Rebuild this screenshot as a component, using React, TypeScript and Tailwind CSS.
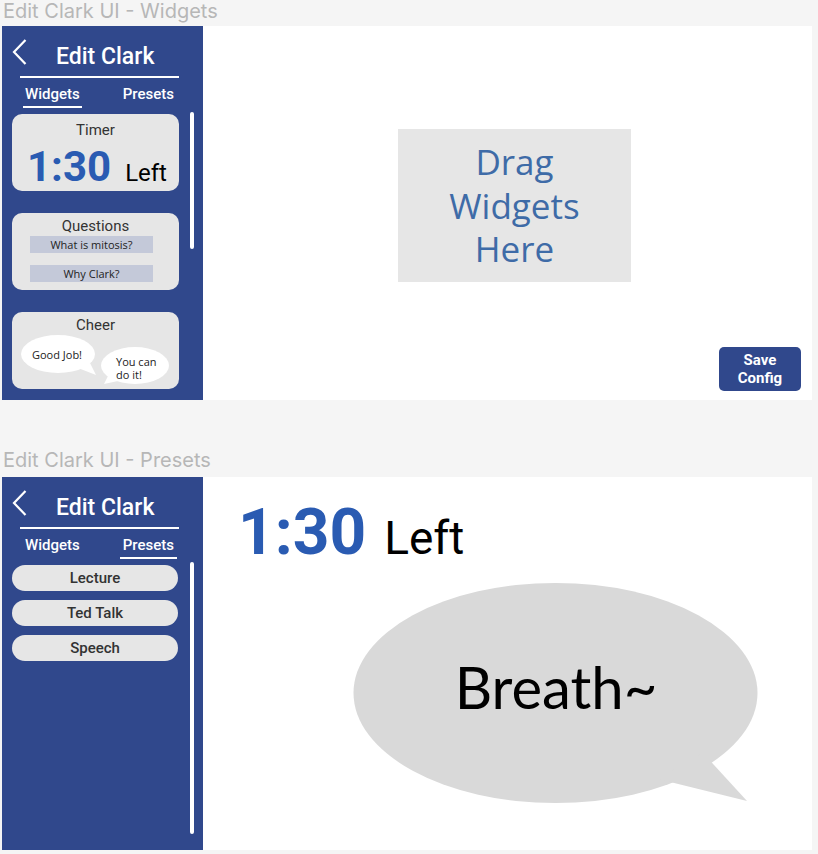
import React from "react";

const roboto = "font-['Roboto','Liberation_Sans',sans-serif]";
const soft = "font-['Open_Sans','Liberation_Sans',sans-serif]";

const Chevron = () => (
  <svg width="15" height="26" viewBox="0 0 15 26" className="ml-[10px] shrink-0">
    <path d="M13.5 1 L2 13 L13.5 25" fill="none" stroke="white" strokeWidth="2.2" />
  </svg>
);

const SideHeader = ({ tab }: { tab: "widgets" | "presets" }) => (
  <div className="pt-[13px]">
    <div className="flex items-start">
      <Chevron />
      <span className={`${roboto} ml-[29px] mt-[4px] text-[23px] leading-[28px] font-medium text-white`}>
        Edit Clark
      </span>
    </div>
    <div className="ml-[18px] mt-[5px] h-[2px] w-[159px] bg-white" />
    <div className={`${roboto} flex pl-[21px] mt-[6px] text-[15px] leading-[20px] font-medium text-white`}>
      <span
        className={`px-[2px] pb-[2px] border-b-2 ${
          tab === "widgets" ? "border-white" : "border-transparent"
        }`}
      >
        Widgets
      </span>
      <span
        className={`ml-[38px] px-[3px] pb-[2px] border-b-2 ${
          tab === "presets" ? "border-white" : "border-transparent"
        }`}
      >
        Presets
      </span>
    </div>
  </div>
);

const Title = ({ text }: { text: string }) => (
  <div className="h-[26px] pl-[3px]">
    <span className="font-['Inter','Liberation_Sans',sans-serif] text-[20px] leading-[22px] text-[#b7b7b7]">
      {text}
    </span>
  </div>
);

const CheerBubbles = () => (
  <div className="relative h-[55px]">
    <svg width="167" height="55" className="absolute left-0 top-0">
      <ellipse cx="46" cy="20" rx="37" ry="19" fill="white" />
      <polygon points="66,34 78,29 84,41" fill="white" />
      <ellipse cx="123" cy="31.5" rx="34" ry="18.5" fill="white" />
      <polygon points="96,42 106,47 92,50" fill="white" />
    </svg>
    <span className={`${soft} absolute left-[20px] top-[14px] text-[11px] leading-[14px] text-[#222]`}>
      Good Job!
    </span>
    <span className={`${soft} absolute left-[104px] top-[21px] text-[11px] leading-[13px] text-[#222]`}>
      You can
      <br />
      do it!
    </span>
  </div>
);

const WidgetsFrame = () => (
  <div className="ml-[2px] flex h-[374px] w-[810px] bg-white">
    <div className="w-[201px] shrink-0 bg-[#30488c]">
      <SideHeader tab="widgets" />
      <div className="mt-[4px] flex items-start">
        <div className="ml-[10px] mt-[2px] flex w-[167px] flex-col gap-[22px]">
          {/* Timer */}
          <div className="h-[77px] rounded-[10px] bg-[#e6e6e6] pt-[7px]">
            <div className={`${roboto} text-center text-[15px] leading-[18px] text-[#333]`}>Timer</div>
            <div className={`${roboto} mt-[7px] flex items-baseline pl-[15px]`}>
              <span className="text-[42px] leading-[42px] font-bold text-[#2a5bb2]">1:30</span>
              <span className="ml-[14px] text-[24px] leading-[24px] text-black">Left</span>
            </div>
          </div>
          {/* Questions */}
          <div className="h-[77px] rounded-[10px] bg-[#e6e6e6] pt-[4px]">
            <div className={`${roboto} text-center text-[15px] leading-[18px] text-[#333]`}>Questions</div>
            <div className={`${soft} ml-[18px] mt-[1px] flex w-[123px] flex-col gap-[12px] text-[11px] text-[#222]`}>
              <div className="h-[17px] bg-[#c4c9d9] text-center leading-[17px]">What is mitosis?</div>
              <div className="h-[17px] bg-[#c4c9d9] text-center leading-[17px]">Why Clark?</div>
            </div>
          </div>
          {/* Cheer */}
          <div className="h-[77px] rounded-[10px] bg-[#e6e6e6] pt-[4px]">
            <div className={`${roboto} text-center text-[15px] leading-[18px] text-[#333]`}>Cheer</div>
            <CheerBubbles />
          </div>
        </div>
        <div className="ml-[11px] h-[137px] w-[4px] rounded-full bg-white" />
      </div>
    </div>
    <div className="flex flex-1 flex-col">
      <div
        className={`${soft} ml-[195px] mt-[103px] flex h-[153px] w-[233px] flex-col items-center justify-center bg-[#e6e6e6] text-[35px] leading-[43.5px] text-[#3e6ba7]`}
      >
        <span>Drag</span>
        <span>Widgets</span>
        <span>Here</span>
      </div>
      <button
        className={`${roboto} mt-auto mb-[9px] mr-[11px] h-[44px] w-[82px] self-end rounded-[5px] bg-[#30488c] text-[15px] leading-[18px] font-bold text-white`}
      >
        Save
        <br />
        Config
      </button>
    </div>
  </div>
);

const PresetsFrame = () => (
  <div className="ml-[2px] flex h-[373px] w-[810px] bg-white">
    <div className="w-[201px] shrink-0 bg-[#30488c]">
      <SideHeader tab="presets" />
      <div className="mt-[3px] flex items-start">
        <div className={`${roboto} ml-[10px] mt-[3px] flex w-[166px] flex-col gap-[9px] text-[15px] font-medium text-[#333]`}>
          {["Lecture", "Ted Talk", "Speech"].map((p) => (
            <div key={p} className="h-[26px] rounded-[13px] bg-[#e6e6e6] text-center leading-[26px]">
              {p}
            </div>
          ))}
        </div>
        <div className="ml-[12px] h-[272px] w-[4px] rounded-full bg-white" />
      </div>
    </div>
    <div className="flex flex-1 flex-col pl-[35px]">
      <div className={`${roboto} mt-[24px] flex items-baseline`}>
        <span className="text-[64px] leading-[64px] font-bold text-[#2a5bb2]">1:30</span>
        <span className="ml-[18px] text-[46px] leading-[46px] text-black">Left</span>
      </div>
      <div className="relative ml-[115px] mt-[18px] h-[222px] w-[406px]">
        <svg width="406" height="222" className="absolute left-0 top-0">
          <ellipse cx="202.5" cy="110" rx="202" ry="110" fill="#d9d9d9" />
          <polygon points="350,170 394,218 305,196" fill="#d9d9d9" />
        </svg>
        <div className="absolute inset-0 flex items-center justify-center pb-[14px]">
          <span className="font-['Lato','Open_Sans',sans-serif] text-[58px] leading-[64px] text-black">
            Breath~
          </span>
        </div>
      </div>
    </div>
  </div>
);

export default function App() {
  return (
    <div className="h-[854px] w-[818px] overflow-hidden bg-[#f5f5f5]">
      <Title text="Edit Clark UI - Widgets" />
      <WidgetsFrame />
      <div className="mt-[49px] h-[28px] pl-[3px]">
        <span className="font-['Inter','Liberation_Sans',sans-serif] text-[20px] leading-[22px] text-[#b7b7b7]">
          Edit Clark UI - Presets
        </span>
      </div>
      <PresetsFrame />
    </div>
  );
}
